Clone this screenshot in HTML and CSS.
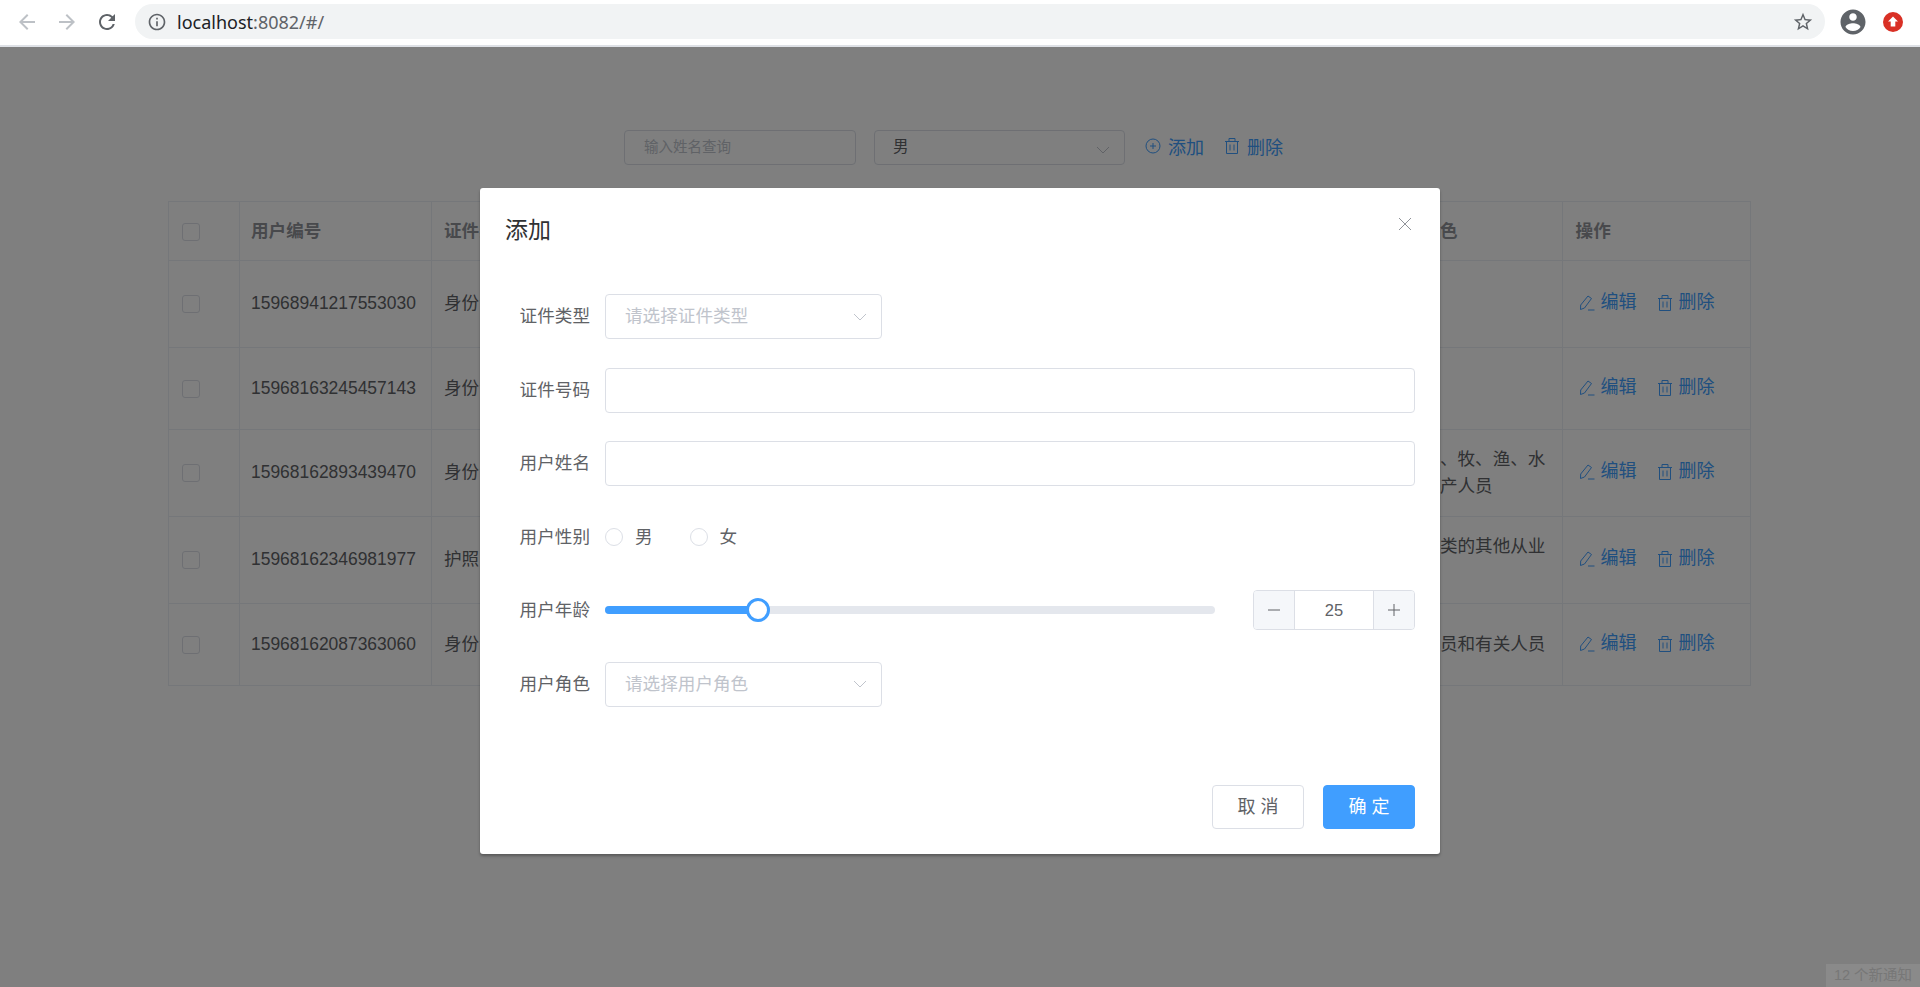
FILE: index.html
```html
<!DOCTYPE html>
<html lang="zh-CN">
<head>
  <meta charset="UTF-8" />
  <meta name="viewport" content="width=device-width, initial-scale=1.0" />
  <title>用户管理</title>
  <link rel="stylesheet" href="styles.css">
</head>
<body>
  <svg class="sprite" width="0" height="0">
    <symbol id="i-trash" viewBox="0 0 16 18"><path d="M1 4.500h14M5 4.500v-3h6v3M2.500 4.500v12h11v-12M6 7.500v6M10 7.500v6" fill="none" stroke="currentColor" /></symbol>
    <symbol id="i-edit" viewBox="0 0 16 16"><path d="M9 1l3.500 2.500-7 9.500-4 1.500.2-4.500zM9 15h6.500" fill="none" stroke="currentColor" /></symbol>
    <symbol id="i-plus" viewBox="0 0 16 16"><circle cx="8" cy="8" r="7" fill="none" stroke="currentColor" /><path d="M5 8h6M8 5v6" fill="none" stroke="currentColor" /></symbol>
    <symbol id="i-down" viewBox="0 0 14 8"><path d="M1 1l6 6 6-6" fill="none" stroke="currentColor" /></symbol>
  </svg>

  <div class="browser-bar">
    <div class="nav-btns">
      <svg class="nav-icon off" viewBox="0 0 24 24"><path d="M20 11H7.830l5.590-5.590L12 4l-8 8 8 8 1.410-1.410L7.830 13H20v-2z" /></svg>
      <svg class="nav-icon off" viewBox="0 0 24 24"><path d="M12 4l-1.410 1.410L16.170 11H4v2h12.170l-5.580 5.590L12 20l8-8z" /></svg>
      <svg class="nav-icon" viewBox="0 0 24 24"><path d="M17.650 6.350A7.958 7.958 0 0012 4c-4.420 0-7.990 3.580-7.990 8s3.570 8 7.990 8c3.730 0 6.840-2.550 7.730-6h-2.080A5.990 5.990 0 0112 18c-3.310 0-6-2.690-6-6s2.690-6 6-6c1.660 0 3.140.690 4.220 1.780L13 11h7V4l-2.350 2.350z" /></svg>
    </div>
    <div class="omnibox">
      <svg class="info-icon" viewBox="0 0 24 24"><path d="M11 7h2v2h-2zm0 4h2v6h-2zm1-9C6.480 2 2 6.480 2 12s4.480 10 10 10 10-4.480 10-10S17.520 2 12 2zm0 18c-4.410 0-8-3.590-8-8s3.590-8 8-8 8 3.590 8 8-3.590 8-8 8z" /></svg>
      <span class="url"><span class="url-host">localhost</span>:8082/#/</span>
      <svg class="star-icon" viewBox="0 0 24 24"><path d="M22 9.240l-7.190-.620L12 2 9.190 8.630 2 9.240l5.460 4.730L5.820 21 12 17.270 18.180 21l-1.630-7.030L22 9.240zM12 15.400l-3.760 2.270 1-4.280-3.320-2.880 4.380-.380L12 6.100l1.710 4.040 4.380.380-3.320 2.880 1 4.280L12 15.400z" /></svg>
    </div>
    <svg class="avatar-icon" viewBox="0 0 24 24"><path d="M12 2C6.480 2 2 6.480 2 12s4.480 10 10 10 10-4.480 10-10S17.520 2 12 2zm0 3c1.660 0 3 1.340 3 3s-1.340 3-3 3-3-1.340-3-3 1.340-3 3-3zm0 14.200c-2.500 0-4.710-1.280-6-3.220.030-1.990 4-3.080 6-3.080 1.990 0 5.970 1.090 6 3.080-1.290 1.940-3.500 3.220-6 3.220z" /></svg>
    <svg class="ext-icon" viewBox="0 0 20 20"><circle cx="10" cy="10" r="10" fill="#d93025" /><path d="M10 4.500l5 5h-2.700v5H7.700v-5H5z" fill="#fff" /></svg>
  </div>

  <div class="page">
    <div class="toolbar">
      <div class="search-box">输入姓名查询</div>
      <div class="filter-box"><span>男</span><svg class="chevron"><use href="#i-down" /></svg></div>
      <a class="tool-link"><svg class="tool-icon"><use href="#i-plus" /></svg>添加</a>
      <a class="tool-link"><svg class="tool-icon"><use href="#i-trash" /></svg>删除</a>
    </div>

    <table class="user-table">
      <thead>
        <tr>
          <th class="col-check"><span class="checkbox"></span></th>
          <th class="col-id">用户编号</th>
          <th class="col-left">证件类型</th>
          <th>证件号码</th>
          <th>用户姓名</th>
          <th>用户性别</th>
          <th>用户年龄</th>
          <th>用户角色</th>
          <th>操作</th>
        </tr>
      </thead>
      <tbody>
        <tr class="tall">
          <td><span class="checkbox"></span></td>
          <td class="col-id">15968941217553030</td>
          <td class="col-left">身份证</td><td></td><td></td><td></td><td></td>
          <td>军人</td>
          <td><a class="row-link"><svg class="row-icon"><use href="#i-edit" /></svg>编辑</a><a class="row-link"><svg class="row-icon"><use href="#i-trash" /></svg>删除</a></td>
        </tr>
        <tr>
          <td><span class="checkbox"></span></td>
          <td class="col-id">15968163245457143</td>
          <td class="col-left">身份证</td><td></td><td></td><td></td><td></td>
          <td></td>
          <td><a class="row-link"><svg class="row-icon"><use href="#i-edit" /></svg>编辑</a><a class="row-link"><svg class="row-icon"><use href="#i-trash" /></svg>删除</a></td>
        </tr>
        <tr class="tall">
          <td><span class="checkbox"></span></td>
          <td class="col-id">15968162893439470</td>
          <td class="col-left">身份证</td><td></td><td></td><td></td><td></td>
          <td>农、林、牧、渔、水利业生产人员</td>
          <td><a class="row-link"><svg class="row-icon"><use href="#i-edit" /></svg>编辑</a><a class="row-link"><svg class="row-icon"><use href="#i-trash" /></svg>删除</a></td>
        </tr>
        <tr class="tall">
          <td><span class="checkbox"></span></td>
          <td class="col-id">15968162346981977</td>
          <td class="col-left">护照</td><td></td><td></td><td></td><td></td>
          <td>不便分类的其他从业人员</td>
          <td><a class="row-link"><svg class="row-icon"><use href="#i-edit" /></svg>编辑</a><a class="row-link"><svg class="row-icon"><use href="#i-trash" /></svg>删除</a></td>
        </tr>
        <tr>
          <td><span class="checkbox"></span></td>
          <td class="col-id">15968162087363060</td>
          <td class="col-left">身份证</td><td></td><td></td><td></td><td></td>
          <td>办事人员和有关人员</td>
          <td><a class="row-link"><svg class="row-icon"><use href="#i-edit" /></svg>编辑</a><a class="row-link"><svg class="row-icon"><use href="#i-trash" /></svg>删除</a></td>
        </tr>
      </tbody>
    </table>

    <div class="overlay">
      <div class="dialog">
        <div class="dialog-head">
          <span class="dialog-title">添加</span>
          <svg class="dialog-close" viewBox="0 0 14 14"><path d="M1 1l12 12M13 1L1 13" fill="none" stroke="currentColor" /></svg>
        </div>

        <div class="form">
          <div class="form-row">
            <label class="form-label">证件类型</label>
            <div class="select"><span class="select-text">请选择证件类型</span><svg class="chevron"><use href="#i-down" /></svg></div>
          </div>
          <div class="form-row">
            <label class="form-label">证件号码</label>
            <div class="text-input"></div>
          </div>
          <div class="form-row">
            <label class="form-label">用户姓名</label>
            <div class="text-input"></div>
          </div>
          <div class="form-row">
            <label class="form-label">用户性别</label>
            <div class="radio-group">
              <span class="radio"><i class="radio-dot"></i><span class="radio-text">男</span></span>
              <span class="radio"><i class="radio-dot"></i><span class="radio-text">女</span></span>
            </div>
          </div>
          <div class="form-row">
            <label class="form-label">用户年龄</label>
            <div class="slider">
              <div class="slider-track">
                <div class="slider-fill"></div>
                <div class="slider-thumb"></div>
              </div>
              <div class="stepper">
                <span class="stepper-btn">
                  <svg viewBox="0 0 14 14"><path d="M1 7h12" stroke="currentColor" /></svg>
                </span>
                <span class="stepper-value">25</span>
                <span class="stepper-btn">
                  <svg viewBox="0 0 14 14"><path d="M1 7h12M7 1v12" stroke="currentColor" /></svg>
                </span>
              </div>
            </div>
          </div>
          <div class="form-row">
            <label class="form-label">用户角色</label>
            <div class="select"><span class="select-text">请选择用户角色</span><svg class="chevron"><use href="#i-down" /></svg></div>
          </div>
        </div>

        <div class="dialog-foot">
          <button class="btn">取 消</button>
          <button class="btn btn-primary">确 定</button>
        </div>
      </div>
    </div>

    <div class="notice">12 个新通知</div>
  </div>
</body>
</html>
```

FILE: styles.css
```css
* {
  box-sizing: border-box;
}

html,
body {
  height: 100%;
}

body {
  margin: 0;
  display: flex;
  flex-direction: column;
  overflow: hidden;
  font-family: "Liberation Sans", "Noto Sans CJK SC", sans-serif;
  font-size: 17.6px;
  color: #606266;
  background: #fff;
}

.sprite {
  position: absolute;
}

/* browser chrome */
.browser-bar {
  flex: none;
  height: 47px;
  display: flex;
  align-items: center;
  padding: 0 17px 2px 15px;
  background: #fff;
  border-bottom: 2px solid #dee1e6;
}

.nav-btns {
  display: flex;
  gap: 16px;
  margin-right: 16px;
}

.nav-icon {
  width: 24px;
  height: 24px;
  fill: #5f6368;
}

.nav-icon.off {
  fill: #bdc1c6;
}

.omnibox {
  flex: 1;
  height: 35px;
  display: flex;
  align-items: center;
  padding: 0 11px 0 12px;
  border-radius: 18px;
  background: #f1f3f4;
}

.info-icon {
  width: 20px;
  height: 20px;
  fill: #5f6368;
}

.url {
  flex: 1;
  margin-left: 10px;
  font-family: "Noto Sans", sans-serif;
  font-size: 18px;
  color: #5f6368;
}

.url-host {
  color: #202124;
}

.star-icon {
  width: 22px;
  height: 22px;
  fill: #5f6368;
}

.avatar-icon {
  width: 30px;
  height: 30px;
  margin-left: 13px;
  fill: #5f6368;
}

.ext-icon {
  width: 20px;
  height: 20px;
  margin-left: 15px;
}

/* page behind the dialog */
.page {
  flex: 1;
  position: relative;
  overflow: hidden;
}

.toolbar {
  display: flex;
  align-items: center;
  padding: 83px 0 0 624px;
  height: 118px;
}

.search-box {
  width: 232px;
  height: 35px;
  line-height: 33px;
  padding: 0 19px;
  font-size: 14.5px;
  color: #c0c4cc;
  border: 1px solid #dcdfe6;
  border-radius: 4px;
}

.filter-box {
  width: 251px;
  height: 35px;
  margin-left: 18px;
  padding: 0 14px 0 18px;
  display: flex;
  align-items: center;
  justify-content: space-between;
  font-size: 15.500px;
  line-height: 20px;
  color: #606266;
  border: 1px solid #dcdfe6;
  border-radius: 4px;
}

.filter-box span {
  margin-bottom: 2px;
}

.filter-box .chevron {
  margin-top: 4px;
}

.chevron {
  width: 14px;
  height: 8px;
  color: #c0c4cc;
}

.tool-link {
  display: flex;
  align-items: center;
  gap: 7px;
  margin-bottom: 3px;
  font-size: 18px;
  color: #409eff;
}

.filter-box + .tool-link {
  margin-left: 20px;
}

.tool-link + .tool-link {
  margin-left: 20px;
}

.tool-icon {
  width: 16px;
  height: 18px;
}

.user-table {
  width: 1583px;
  margin: 36px 0 0 168px;
  table-layout: fixed;
  border-collapse: collapse;
  border: 1px solid #ebeef5;
}

.user-table th,
.user-table td {
  padding: 0 13px;
  line-height: 27.5px;
  text-align: left;
  border: 1px solid #ebeef5;
}

.user-table th {
  height: 59px;
  padding-top: 2px;
  font-weight: bold;
  color: #909399;
}

.user-table td {
  height: 82px;
  color: #606266;
}

.user-table .tall td {
  height: 87px;
}

.user-table .col-check {
  width: 71px;
}

.user-table .col-id {
  width: 192px;
  padding-left: 11px;
  font-size: 17.450px;
}

.user-table th.col-id {
  font-size: 17.6px;
}

.user-table .col-left {
  padding-left: 12px;
}

.checkbox {
  display: block;
  width: 18px;
  height: 18px;
  border: 1px solid #dcdfe6;
  border-radius: 3px;
  background: #fff;
}

.row-link {
  display: inline-flex;
  align-items: center;
  gap: 6px;
  margin-left: 3px;
  margin-right: 17px;
  padding-top: 2px;
  color: #409eff;
  font-size: 18px;
}

.row-icon {
  width: 16px;
  height: 18px;
}

.notice {
  position: absolute;
  right: 0;
  bottom: 0;
  width: 94px;
  height: 23px;
  line-height: 23px;
  text-align: center;
  font-size: 14.5px;
  color: #777;
  background: #8a8a8a;
  z-index: 5;
}

/* dialog */
.overlay {
  position: absolute;
  inset: 0;
  padding-top: 141px;
  display: flex;
  justify-content: center;
  align-items: flex-start;
  background: rgba(0, 0, 0, 0.5);
}

.dialog {
  width: 960px;
  height: 666px;
  display: flex;
  flex-direction: column;
  background: #fff;
  border-radius: 3px;
  box-shadow: 0 2px 3px rgba(0, 0, 0, 0.3);
}

.dialog-head {
  height: 106px;
  display: flex;
  justify-content: space-between;
  align-items: flex-start;
  padding: 26px 28px 0 25px;
}

.dialog-title {
  font-size: 23px;
  line-height: 32px;
  color: #303133;
}

.dialog-close {
  width: 14px;
  height: 14px;
  margin-top: 3px;
  color: #909399;
}

.form {
  display: flex;
  flex-direction: column;
  gap: 28.600px;
  padding-right: 25px;
}

.form-row {
  height: 45px;
  display: flex;
  align-items: center;
}

.form-label {
  width: 110px;
  margin-right: 15px;
  margin-bottom: 4px;
  text-align: right;
}

.select {
  width: 277px;
  height: 45px;
  padding: 0 14px 0 19px;
  display: flex;
  align-items: center;
  justify-content: space-between;
  color: #c0c4cc;
  border: 1px solid #dcdfe6;
  border-radius: 4px;
}

.select-text {
  margin-bottom: 4px;
}

.text-input {
  flex: 1;
  height: 45px;
  border: 1px solid #dcdfe6;
  border-radius: 4px;
}

.radio-group {
  display: flex;
  gap: 37px;
}

.radio {
  display: flex;
  align-items: center;
  gap: 12px;
}

.radio-text {
  margin-bottom: 3px;
}

.radio-dot {
  width: 18px;
  height: 18px;
  border: 1px solid #dcdfe6;
  border-radius: 50%;
}

.slider {
  flex: 1;
  display: flex;
  align-items: center;
  justify-content: space-between;
  margin-bottom: 2px;
}

.slider-track {
  width: 610px;
  height: 8px;
  position: relative;
  border-radius: 4px;
  background: #e4e7ed;
}

.slider-fill {
  width: 153px;
  height: 8px;
  border-radius: 4px 0 0 4px;
  background: #409eff;
}

.slider-thumb {
  position: absolute;
  left: 141px;
  top: -8px;
  width: 24px;
  height: 24px;
  border: 3px solid #409eff;
  border-radius: 50%;
  background: #fff;
}

.stepper {
  width: 162px;
  height: 40px;
  display: flex;
  border: 1px solid #dcdfe6;
  border-radius: 4px;
  overflow: hidden;
}

.stepper-btn {
  flex: none;
  width: 41px;
  display: flex;
  align-items: center;
  justify-content: center;
  color: #606266;
  background: #f5f7fa;
}

.stepper-btn:first-child {
  border-right: 1px solid #dcdfe6;
}

.stepper-btn:last-child {
  border-left: 1px solid #dcdfe6;
}

.stepper-btn svg {
  width: 14px;
  height: 14px;
}

.stepper-value {
  flex: 1;
  text-align: center;
  line-height: 38px;
  font-size: 16.500px;
}

.dialog-foot {
  margin-top: auto;
  padding: 0 25px 25px 0;
  display: flex;
  justify-content: flex-end;
  gap: 19px;
}

.btn {
  width: 92px;
  height: 44px;
  padding: 0 0 4px;
  font-family: inherit;
  font-size: 18px;
  color: #606266;
  background: #fff;
  border: 1px solid #dcdfe6;
  border-radius: 4px;
}

.btn-primary {
  color: #fff;
  background: #409eff;
  border-color: #409eff;
}
```
